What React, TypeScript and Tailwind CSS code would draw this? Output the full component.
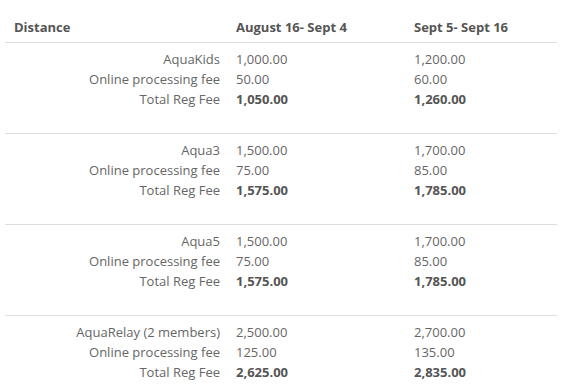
import React from 'react';

interface FeeGroup {
  name: string;
  early: [string, string, string];
  late: [string, string, string];
}

const groups: FeeGroup[] = [
  { name: 'AquaKids', early: ['1,000.00', '50.00', '1,050.00'], late: ['1,200.00', '60.00', '1,260.00'] },
  { name: 'Aqua3', early: ['1,500.00', '75.00', '1,575.00'], late: ['1,700.00', '85.00', '1,785.00'] },
  { name: 'Aqua5', early: ['1,500.00', '75.00', '1,575.00'], late: ['1,700.00', '85.00', '1,785.00'] },
  { name: 'AquaRelay (2 members)', early: ['2,500.00', '125.00', '2,625.00'], late: ['2,700.00', '135.00', '2,835.00'] },
];

const Amounts = ({ values }: { values: [string, string, string] }) => (
  <>
    <div>{values[0]}</div>
    <div>{values[1]}</div>
    <div className="font-bold text-[#555]">{values[2]}</div>
  </>
);

export default function App() {
  return (
    <div
      className="w-[568px] h-[385px] bg-white overflow-hidden text-[13px] leading-5 text-[#666]"
      style={{ fontFamily: '"Open Sans", Arial, sans-serif' }}
    >
      <table className="ml-[5px] w-[552px] table-fixed border-collapse">
        <colgroup>
          <col className="w-[223px]" />
          <col className="w-[178px]" />
          <col className="w-[151px]" />
        </colgroup>
        <thead>
          <tr className="border-b border-[#ddd] text-left font-bold text-[#555]">
            <th className="pl-[9px] pt-[17px] pb-[5px]">Distance</th>
            <th className="pl-[8px] pt-[17px] pb-[5px]">August 16- Sept 4</th>
            <th className="pl-[8px] pt-[17px] pb-[5px]">Sept 5- Sept 16</th>
          </tr>
        </thead>
        <tbody>
          {groups.map((g) => (
            <tr key={g.name} className="border-b border-[#ddd] align-top">
              <td className="pr-[8px] pt-[6px] pb-[24px] text-right">
                <div>{g.name}</div>
                <div>Online processing fee</div>
                <div>Total Reg Fee</div>
              </td>
              <td className="pl-[8px] pt-[6px] pb-[24px]">
                <Amounts values={g.early} />
              </td>
              <td className="pl-[8px] pt-[6px] pb-[24px]">
                <Amounts values={g.late} />
              </td>
            </tr>
          ))}
        </tbody>
      </table>
    </div>
  );
}
